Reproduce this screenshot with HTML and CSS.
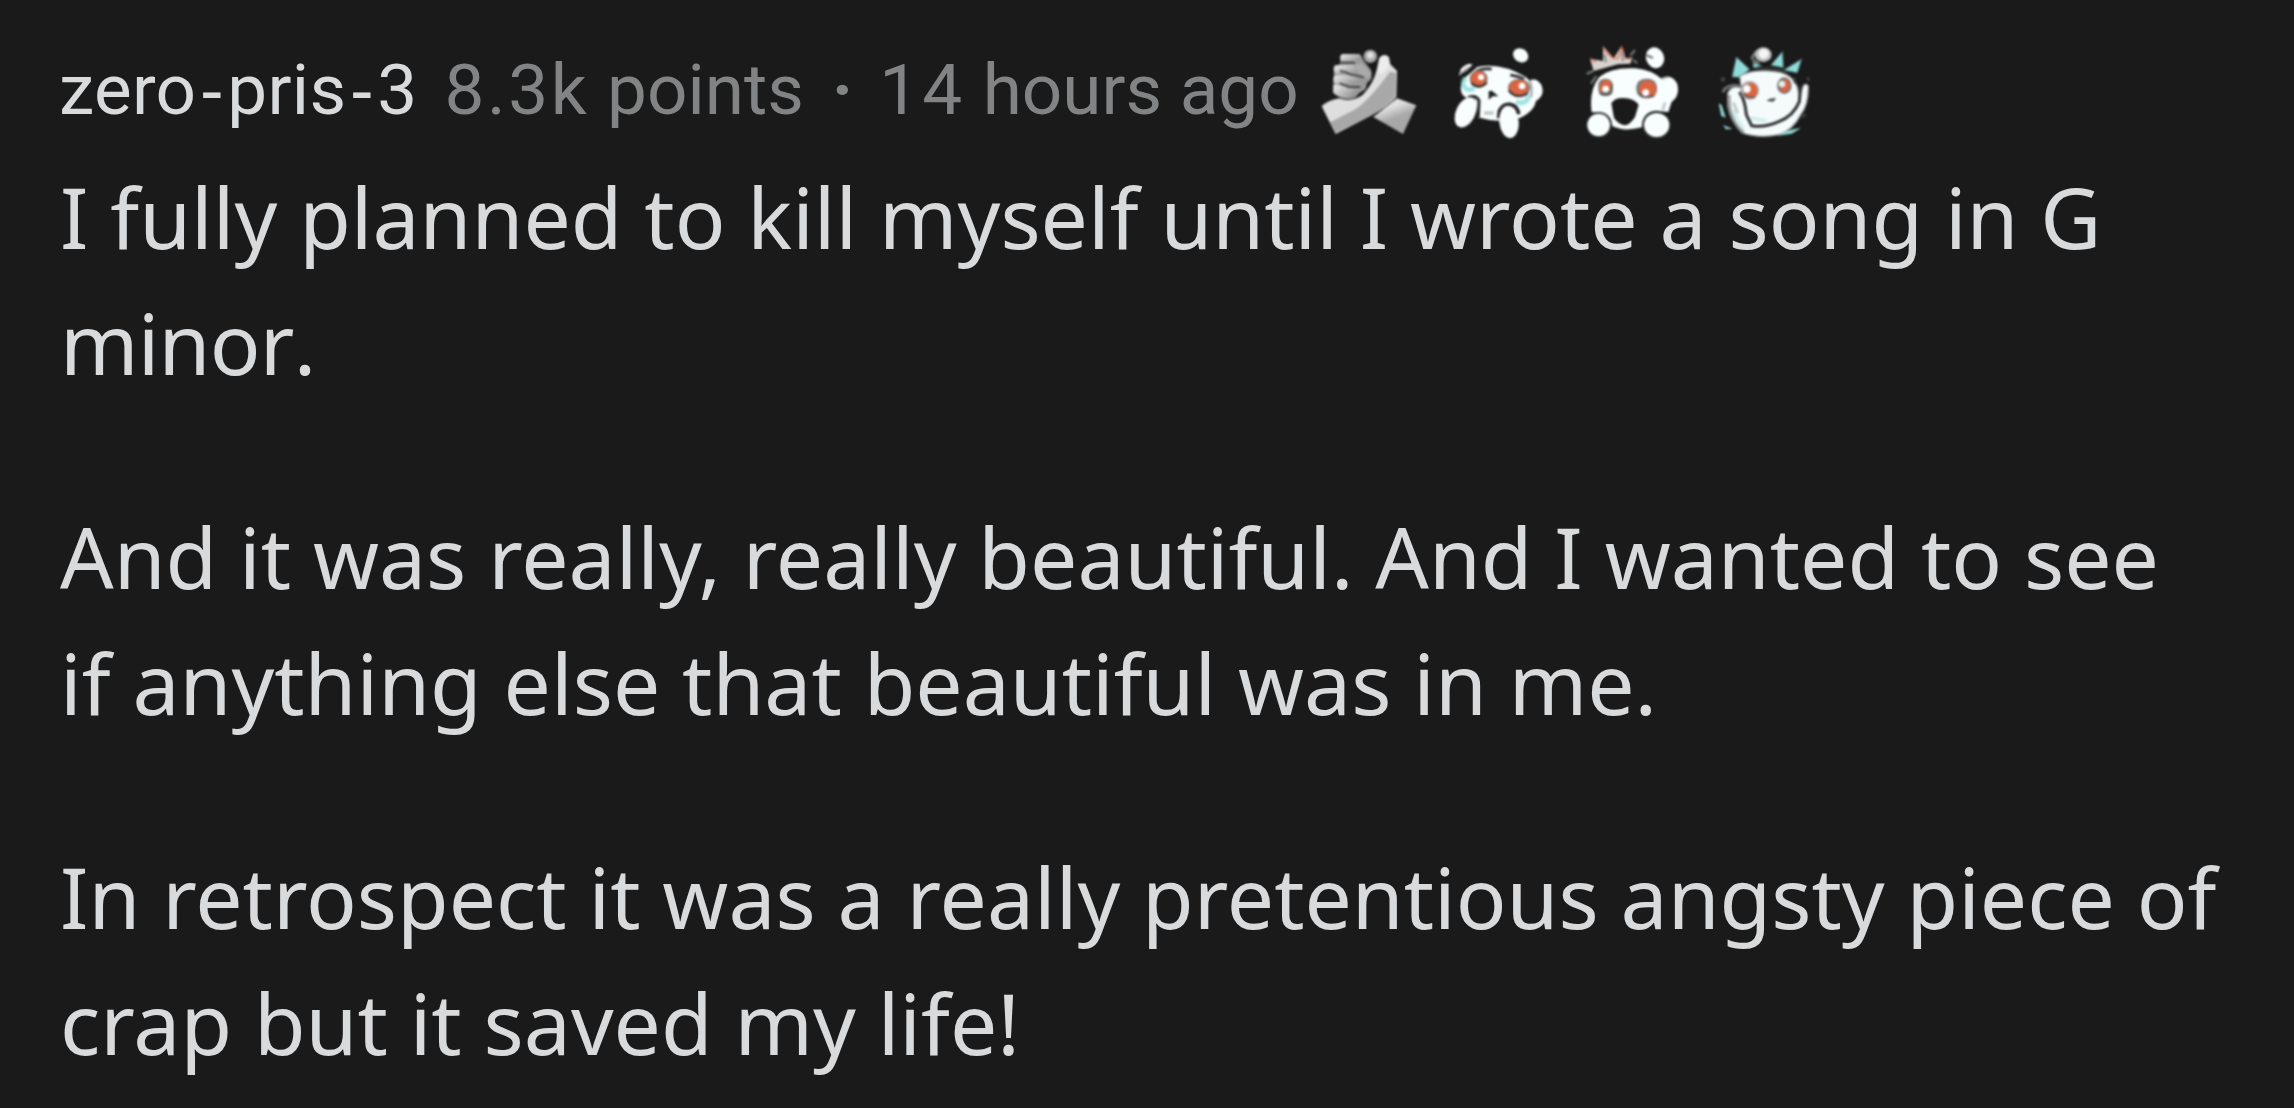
FILE: index.html
```html
<!DOCTYPE html>
<html lang="en">
<head>
    <meta charset="UTF-8">
    <meta name="viewport" content="width=device-width, initial-scale=1.0">
    <title>Comment</title>
    <link rel="stylesheet" href="styles.css">
</head>
<body>
    <article class="comment">
        <header class="comment-header">
            <span class="author">zero<span class="hyphen">-</span>pris<span class="hyphen">-</span>3</span>
            <span class="points"><span class="score">8.3k</span> points</span>
            <span class="dot">·</span>
            <span class="time"><span class="hours">14</span> hours ago</span>

            <div class="awards">
                <!-- Clasped hands -->
                <svg class="award" viewBox="36 21 288 288">
                    <defs>
                        <linearGradient id="arm" x1="0" y1="0" x2="0.45" y2="1">
                            <stop offset="0.35" stop-color="#e0e0e0"/>
                            <stop offset="0.65" stop-color="#a8a8a8"/>
                        </linearGradient>
                        <linearGradient id="finger" x1="0" y1="0" x2="1" y2="0.6">
                            <stop offset="0" stop-color="#eeeeee"/>
                            <stop offset="1" stop-color="#989898"/>
                        </linearGradient>
                    </defs>
                    <path d="M264 190 L322 211 L282 297 L193 246 Z" fill="url(#arm)"/>
                    <path d="M76 92 L94 88 L93 68 Q94 58 106 58 L146 57 Q158 60 163 76 L188 108 L187 132 L174 144 L170 162 L151 174 L138 188 Q112 196 92 187 L72 174 Z" fill="#999"/>
                    <rect x="94" y="57" width="62" height="21" rx="10" fill="url(#finger)"/>
                    <rect x="74" y="90" width="80" height="26" rx="12" fill="url(#finger)"/>
                    <rect x="73" y="121" width="76" height="26" rx="12" fill="url(#finger)"/>
                    <path d="M73 151 Q90 146 118 157 Q145 162 139 178 Q130 190 106 188 Q80 184 73 171 Z" fill="url(#finger)"/>
                    <path d="M95 83 L138 83 M93 108 Q110 109 126 119 L165 127 M92 145 L120 156 L154 156" fill="none" stroke="#444" stroke-width="6"/>
                    <path d="M132 91 L158 85 L187 115 L180 130 L156 121 Z" fill="#aaa"/>
                    <circle cx="184" cy="64" r="20" fill="#a6a6a6"/>
                    <circle cx="184" cy="61" r="10" fill="#e0e0e0"/>
                    <path d="M184 84 L201 80 L198 113 L188 112 Z" fill="#171717"/>
                    <path d="M211 68 Q226 53 240 67 L244 88 L264 108 L262 186 Q232 217 189 240 L80 297 L38 214 Q56 196 91 190 Q126 203 160 181 Q194 145 203 105 Z" fill="#dedede"/>
                    <path d="M243 110 L261 114 L259 184 Q228 218 181 243 L80 294 L64 262 L140 222 Q180 196 243 110 Z" fill="#a8a8a8"/>
                    <path d="M211 70 Q224 54 239 67 L241 92 Q230 108 220 116 L205 114 Z" fill="#ededed"/>
                </svg>

                <!-- Crying -->
                <svg class="award" viewBox="42 21 288 288">
                    <ellipse cx="245" cy="61" rx="24" ry="20" transform="rotate(35 245 61)" fill="#f8fdfd"/>
                    <path d="M60 116 Q70 88 103 87 L84 107 Q70 113 60 123 Z" fill="#a9adad"/>
                    <path d="M66 108 Q78 91 96 90" fill="none" stroke="#fff" stroke-width="7"/>
                    <path d="M115 96 Q185 81 260 126 L272 137 Q291 126 307 149 Q320 181 291 198 Q286 229 243 249 Q184 267 117 247 L108 190 Q66 195 65 159 Q67 132 91 117 Z" fill="#f8fdfd"/>
                    <path d="M111 111 Q125 99 158 102 M214 120 Q237 123 256 132" fill="none" stroke="#343737" stroke-width="9"/>
                    <path d="M271 136 Q281 153 276 186" fill="none" stroke="#a3a9a9" stroke-width="7"/>
                    <circle cx="119" cy="132" r="27" fill="#777"/>
                    <circle cx="118" cy="131" r="23" fill="#d96542"/>
                    <path d="M97 144 Q119 165 144 143" fill="none" stroke="#303030" stroke-width="6"/>
                    <circle cx="126" cy="127" r="9" fill="#fff"/>
                    <ellipse cx="240" cy="159" rx="33" ry="28" fill="#777"/>
                    <ellipse cx="239" cy="157" rx="29" ry="23" fill="#d96542"/>
                    <path d="M209 166 Q232 195 267 175" fill="none" stroke="#303030" stroke-width="6"/>
                    <circle cx="249" cy="153" r="10" fill="#fff"/>
                    <path d="M79 130 Q66 146 79 160 Q90 167 106 161" fill="none" stroke="#7edcda" stroke-width="14" stroke-dasharray="5 2"/>
                    <path d="M232 201 Q265 210 269 181" fill="none" stroke="#7edcda" stroke-width="15" stroke-dasharray="5 2"/>
                    <path d="M151 170 L158 169 L173 182 L160 182 L151 190 Z" fill="#202020" stroke="#202020" stroke-width="4"/>
                    <path d="M135 234 L164 234" stroke="#c4caca" stroke-width="11"/>
                    <path d="M87 188 Q111 178 120 197 L118 246" fill="none" stroke="#252525" stroke-width="9"/>
                    <path d="M179 250 L181 228 Q192 205 213 208 Q236 212 239 238" fill="none" stroke="#252525" stroke-width="11"/>
                    <ellipse cx="80" cy="232" rx="29" ry="48" transform="rotate(25 80 232)" fill="#f8fdfd"/>
                    <ellipse cx="210" cy="261" rx="29" ry="48" transform="rotate(-6 210 261)" fill="#f8fdfd"/>
                </svg>

                <!-- Shocked -->
                <svg class="award" viewBox="33 21 288 288">
                    <path d="M48 71 L87 78 L87 33 L119 70 L143 33 L155 72 L175 67 L169 86 L132 88 L59 108 Z" fill="#d8d1cd"/>
                    <path d="M49 71 L65 80 M87 36 L94 48 L116 69 L132 70 L143 38 L151 57 M154 70 L171 70" fill="none" stroke="#d96542" stroke-width="5" stroke-dasharray="8 3"/>
                    <path d="M91 58 L96 82 M144 52 L147 78" stroke="#888" stroke-width="6"/>
                    <path d="M169 62 L183 45 M177 75 L190 84 M38 116 L58 108 M51 146 L67 123" stroke="#666b6b" stroke-width="8"/>
                    <ellipse cx="243" cy="68" rx="27" ry="32" transform="rotate(-20 243 68)" fill="#f8fdfd"/>
                    <path d="M216 60 L237 69" stroke="#777" stroke-width="6"/>
                    <path d="M76 126 Q111 96 184 100 Q231 104 263 132 Q292 114 309 145 Q320 181 293 201 L283 231 Q251 224 218 244 L203 277 Q151 291 116 274 L94 236 L53 231 Q44 167 76 126 Z" fill="#f8fdfd"/>
                    <path d="M263 132 Q274 127 283 127" fill="none" stroke="#bcc2c2" stroke-width="6"/>
                    <path d="M273 202 L266 225" stroke="#c0c5c5" stroke-width="8"/>
                    <rect x="73" y="131" width="43" height="52" rx="19" fill="#777"/>
                    <path d="M76 169 Q78 136 99 133 Q116 138 111 163 L106 169 Z" fill="#d96542"/>
                    <path d="M77 175 Q94 185 112 174 L114 148" fill="none" stroke="#555" stroke-width="5"/>
                    <circle cx="95" cy="162" r="10" fill="#fff"/>
                    <rect x="187" y="131" width="62" height="59" rx="26" fill="#777"/>
                    <path d="M196 178 Q192 137 218 136 Q249 138 246 168 Q244 190 215 187 Z" fill="#d96542"/>
                    <path d="M195 174 Q213 191 241 182" fill="none" stroke="#555" stroke-width="5"/>
                    <circle cx="215" cy="173" r="10" fill="#fff"/>
                    <path d="M112 205 Q122 188 148 189 Q180 190 194 209 L183 246 Q169 268 154 271 Q135 270 120 249 Z" fill="#1a1a1a"/>
                    <circle cx="75" cy="270" r="39" fill="#252828"/>
                    <circle cx="247" cy="270" r="43" fill="#252828"/>
                    <circle cx="74" cy="270" r="34" fill="#f8fdfd"/>
                    <ellipse cx="248" cy="270" rx="38" ry="36" fill="#f8fdfd"/>
                </svg>

                <!-- Delighted -->
                <svg class="award" viewBox="39 21 288 288">
                    <path d="M143 73 Q149 55 164 46 M146 75 L166 86" fill="none" stroke="#777" stroke-width="9"/>
                    <ellipse cx="178" cy="59" rx="25" ry="22" fill="#bfc2c2"/>
                    <circle cx="179" cy="56" r="15" fill="#f5f5f5"/>
                    <path d="M97 66 L137 103 L108 127 L84 126 Z M147 82 L174 93 L148 99 Z M236 49 L238 98 L200 91 Z M293 72 L280 114 L239 105 Z" fill="#8edcda" stroke="#4b6666" stroke-width="3"/>
                    <path d="M107 123 Q150 101 210 109 Q262 113 280 156 L286 184 L298 152 Q307 142 313 154 Q314 210 291 238 Q267 285 226 299 Q164 312 113 293 Q79 257 72 215 L71 174 Q83 149 111 156 Z" fill="#f5fafa" stroke="#8f9494" stroke-width="4"/>
                    <path d="M57 172 Q62 154 91 151 L119 156" fill="none" stroke="#6c6f6f" stroke-width="9"/>
                    <path d="M155 104 Q209 96 249 113" fill="none" stroke="#353838" stroke-width="8"/>
                    <path d="M106 171 Q123 193 127 239 L143 272 Q183 279 224 260 Q268 244 286 200 L290 156" fill="none" stroke="#303333" stroke-width="9"/>
                    <path d="M76 180 L78 222 Q88 266 120 294" fill="none" stroke="#8b9090" stroke-width="6"/>
                    <path d="M88 203 L101 234" stroke="#c4caca" stroke-width="9"/>
                    <circle cx="137" cy="166" r="28" fill="#aaa6a4"/>
                    <path d="M132 143 Q160 142 161 168 Q158 189 137 190 L119 177 L138 168 Z" fill="#d96542"/>
                    <path d="M117 176 Q133 193 153 185" fill="none" stroke="#625854" stroke-width="5"/>
                    <circle cx="129" cy="162" r="11" fill="#fff"/>
                    <ellipse cx="241" cy="152" rx="22" ry="25" fill="#777"/>
                    <path d="M242 129 Q260 136 257 158 Q250 175 232 168 L226 159 L242 151 Z" fill="#d96542"/>
                    <circle cx="234" cy="147" r="10" fill="#e8eded"/>
                    <path d="M188 198 L195 192 L216 188 L209 200 Z" fill="#4a4d4d"/>
                    <path d="M85 225 L119 285 M144 250 L187 257" stroke="#8edcda" stroke-width="9" stroke-dasharray="3 4"/>
                    <path d="M44 204 L53 211 L65 248 L52 243 Z M57 270 L86 282 L66 283 Z M222 302 Q254 283 291 279 L263 296 Z" fill="#8edcda"/>
                    <circle cx="57" cy="133" r="7" fill="#444"/>
                    <path d="M269 128 L274 145 M310 126 L315 137 M294 247 L305 238" stroke="#444" stroke-width="7"/>
                </svg>
            </div>
        </header>

        <div class="comment-body">
            <p>I fully planned to kill myself until I wrote a song in G <span class="tight">minor.</span></p>
            <p>And it was really, really beautiful. And I wanted to see if anything else that beautiful was in me.</p>
            <p>In retrospect it was a really pretentious angsty piece of crap but it saved my life!</p>
        </div>
    </article>
</body>
</html>
```

FILE: styles.css
```css
body {
    margin: 0;
    background-color: #1a1a1a;
    color: #d9dadc;
}

.comment {
    padding: 42px 70px 0 60px;
}

.comment-header {
    display: flex;
    align-items: center;
    gap: 26px;
    height: 96px;
    font-family: Roboto, "Noto Sans", sans-serif;
    font-size: 71px;
    line-height: 96px;
    white-space: nowrap;
    color: #818384;
}

.author {
    margin-left: -1px;
    margin-right: 1px;
    letter-spacing: 0.3px;
    color: #d9dadc;
}

.hyphen {
    padding: 0 3.5px;
    font-family: "Liberation Sans", sans-serif;
    line-height: 1;
}

.score {
    letter-spacing: 2.6px;
}

.dot {
    margin-left: 2px;
    font-weight: bold;
}

.hours {
    letter-spacing: 3px;
}

.awards {
    display: flex;
    gap: 36px;
    margin-left: -4px;
}

.award {
    width: 96px;
    height: 96px;
    overflow: visible;
    filter: blur(0.8px);
}

.comment-body {
    margin-top: 16px;
    font-family: "Noto Sans", sans-serif;
    font-size: 84px;
    line-height: 126px;
}

.comment-body p {
    margin: 0 0 88px;
}

.comment-body p:last-child {
    margin-bottom: 0;
}

/* unkerned "r." with the letters pulled in a little */
.tight {
    font-kerning: none;
    letter-spacing: -0.8px;
}
```
